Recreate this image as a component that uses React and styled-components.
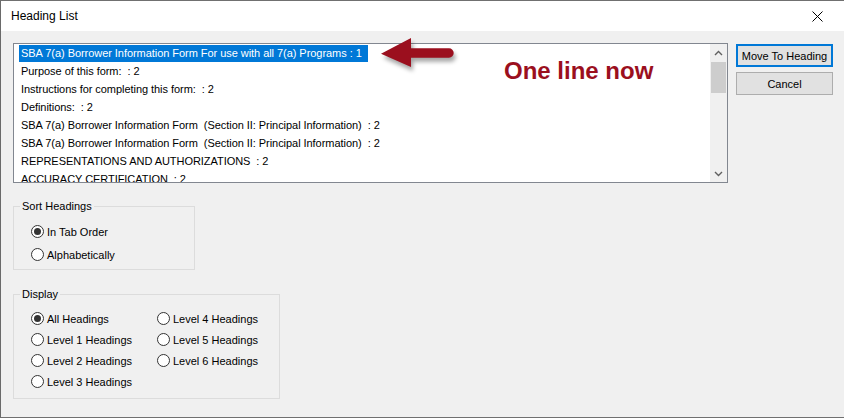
import React from "react";
import styled, { createGlobalStyle } from "styled-components";

const GlobalStyle = createGlobalStyle`
  html, body {
    margin: 0;
    padding: 0;
    background: #ffffff;
  }
  body {
    font-family: "Liberation Sans", Arial, sans-serif;
    color: #000;
  }
`;

const Window = styled.div`
  position: relative;
  width: 843px;
  height: 416px;
  border-top: 1px solid #707070;
  border-left: 1px solid #6a6a6a;
  border-bottom: 1px solid #707070;
  background: #f0f0f0;
  display: flex;
  flex-direction: column;
  overflow: hidden;
`;

const TitleBar = styled.div`
  height: 30px;
  background: #ffffff;
  display: flex;
  align-items: center;
  justify-content: space-between;
  padding: 0 21px 0 10px;
`;

const Title = styled.div`
  font-size: 12px;
  line-height: 30px;
`;

const Body = styled.div`
  padding: 12px 0 0 12px;
  display: flex;
  flex-direction: column;
  align-items: flex-start;
`;

const TopRow = styled.div`
  display: flex;
  align-items: flex-start;
  gap: 8px;
`;

const ListBox = styled.div`
  width: 713px;
  height: 138px;
  border: 1px solid #828790;
  background: #ffffff;
  display: flex;
`;

const Items = styled.div`
  flex: 1;
  padding: 1px 0 0 5px;
  overflow: hidden;
`;

const Item = styled.div`
  width: fit-content;
  height: 17px;
  line-height: 17px;
  margin-bottom: 1px;
  padding: 0 6px 0 2px;
  font-size: 11px;
  letter-spacing: -0.05px;
  white-space: pre;
  background: ${(p) => (p.$selected ? "#0078d7" : "transparent")};
  color: ${(p) => (p.$selected ? "#ffffff" : "#000000")};
`;

const ScrollBar = styled.div`
  width: 17px;
  background: #f0f0f0;
  display: flex;
  flex-direction: column;
  align-items: center;
`;

const ScrollArrow = styled.div`
  width: 17px;
  height: 17px;
  display: flex;
  align-items: center;
  justify-content: center;
`;

const Thumb = styled.div`
  width: 15px;
  height: 31px;
  margin: 1px 0 0 -1px;
  background: #cdcdcd;
`;

const Spacer = styled.div`
  flex: 1;
`;

const ButtonColumn = styled.div`
  display: flex;
  flex-direction: column;
  gap: 5px;
  margin-top: 1px;
`;

const Button = styled.button`
  width: 97px;
  height: 23px;
  padding: 0;
  font-family: "Liberation Sans", Arial, sans-serif;
  font-size: 11px;
  color: #000;
  background: #e1e1e1;
  border: ${(p) => (p.$default ? "2px solid #0078d7" : "1px solid #adadad")};
  outline: none;
`;

const Group = styled.fieldset`
  margin: ${(p) => p.$top}px 0 0 0;
  width: ${(p) => p.$width}px;
  min-inline-size: 0;
  box-sizing: border-box;
  border: 1px solid #dcdcdc;
  padding: ${(p) => p.$pad};
`;

const Legend = styled.legend`
  padding: 0 2px;
  font-size: 11px;
  line-height: 13px;
`;

const RadioGrid = styled.div`
  display: grid;
  padding-left: 11px;
  grid-template-columns: ${(p) => p.$columns};
  grid-template-rows: repeat(${(p) => p.$rows}, ${(p) => p.$rowHeight}px);
  grid-auto-flow: column;
`;

const RadioRow = styled.label`
  display: flex;
  align-items: center;
  gap: 3px;
  font-size: 11px;
  white-space: nowrap;
`;

const RadioCircle = styled.span`
  width: 11px;
  height: 11px;
  border: 1px solid #333333;
  border-radius: 50%;
  background: #ffffff;
  display: flex;
  align-items: center;
  justify-content: center;
  flex-shrink: 0;

  &::after {
    content: "";
    width: 7px;
    height: 7px;
    border-radius: 50%;
    background: ${(p) => (p.$checked ? "#333333" : "transparent")};
  }
`;

const Callout = styled.div`
  position: absolute;
  left: 503px;
  top: 58px;
  font-family: "Liberation Sans", Arial, sans-serif;
  font-weight: bold;
  font-size: 24px;
  line-height: 24px;
  color: #9b0f1e;
`;

const ArrowWrap = styled.div`
  position: absolute;
  left: 378px;
  top: 34px;
  width: 80px;
  height: 40px;
  filter: drop-shadow(2px 4px 2px rgba(0, 0, 0, 0.35));
`;

const headings = [
  "SBA 7(a) Borrower Information Form For use with all 7(a) Programs : 1",
  "Purpose of this form:  : 2",
  "Instructions for completing this form:  : 2",
  "Definitions:  : 2",
  "SBA 7(a) Borrower Information Form  (Section II: Principal Information)  : 2",
  "SBA 7(a) Borrower Information Form  (Section II: Principal Information)  : 2",
  "REPRESENTATIONS AND AUTHORIZATIONS  : 2",
  "ACCURACY CERTIFICATION  : 2",
];

const displayOptions = [
  "All Headings",
  "Level 1 Headings",
  "Level 2 Headings",
  "Level 3 Headings",
  "Level 4 Headings",
  "Level 5 Headings",
  "Level 6 Headings",
];

const Radio = ({ label, checked }) => (
  <RadioRow>
    <RadioCircle $checked={checked} />
    {label}
  </RadioRow>
);

const Chevron = ({ up }) => (
  <svg width="9" height="6" viewBox="0 0 9 6">
    <path
      d={up ? "M1 5 L4.5 1.5 L8 5" : "M1 1 L4.5 4.5 L8 1"}
      fill="none"
      stroke="#606060"
      strokeWidth="1.4"
    />
  </svg>
);

const App = () => {
  return (
    <Window>
      <GlobalStyle />
      <TitleBar>
        <Title>Heading List</Title>
        <svg width="11" height="11" viewBox="0 0 11 11">
          <path d="M0.5 0.5 L10.5 10.5 M10.5 0.5 L0.5 10.5" stroke="#000" strokeWidth="1" />
        </svg>
      </TitleBar>
      <Body>
        <TopRow>
          <ListBox>
            <Items>
              {headings.map((h, i) => (
                <Item key={i} $selected={i === 0}>
                  {h}
                </Item>
              ))}
            </Items>
            <ScrollBar>
              <ScrollArrow>
                <Chevron up />
              </ScrollArrow>
              <Thumb />
              <Spacer />
              <ScrollArrow>
                <Chevron />
              </ScrollArrow>
            </ScrollBar>
          </ListBox>
          <ButtonColumn>
            <Button $default>Move To Heading</Button>
            <Button>Cancel</Button>
          </ButtonColumn>
        </TopRow>

        <Group $top={17} $width={182} $pad="7px 0 3px 6px">
          <Legend>Sort Headings</Legend>
          <RadioGrid $columns="1fr" $rows={2} $rowHeight={23}>
            <Radio label="In Tab Order" checked />
            <Radio label="Alphabetically" />
          </RadioGrid>
        </Group>

        <Group $top={18} $width={267} $pad="7px 0 6px 6px">
          <Legend>Display</Legend>
          <RadioGrid $columns="126px 120px" $rows={4} $rowHeight={21}>
            {displayOptions.map((o, i) => (
              <Radio key={o} label={o} checked={i === 0} />
            ))}
          </RadioGrid>
        </Group>
      </Body>

      <ArrowWrap>
        <svg width="80" height="40" viewBox="0 0 80 40">
          <path
            d="M2 18.7 L32 3 L32 13.3 L70 13.3 A4.7 4.7 0 0 1 70 22.7 L32 22.7 L32 32 Z"
            fill="#9b0f1e"
          />
        </svg>
      </ArrowWrap>
      <Callout>One line now</Callout>
    </Window>
  );
};

export default App;
